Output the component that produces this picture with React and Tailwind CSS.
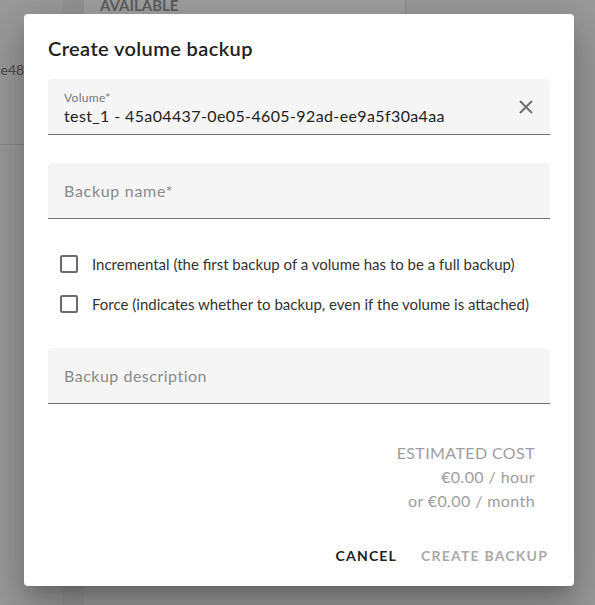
import React, { useState } from 'react';

const fieldBase = 'w-full bg-[#f5f5f5] rounded-t-[4px] border-b border-[#6f6f6f] px-4';

const Checkbox = ({ label, checked, onChange }) => (
    <label className="flex items-center h-10 pl-3 cursor-pointer">
        <span className="w-[18px] h-[18px] border-2 border-[#6b6b6b] rounded-[2px] flex items-center justify-center">
            {checked && (
                <svg viewBox="0 0 24 24" className="w-4 h-4 text-[#6b6b6b]" fill="none" stroke="currentColor" strokeWidth="3">
                    <path d="M5 12l5 5 9-10" />
                </svg>
            )}
        </span>
        <input type="checkbox" className="hidden" checked={checked} onChange={onChange} />
        <span className="ml-[14px] text-[15px] text-[#333]">{label}</span>
    </label>
);

export default function App() {
    const [incremental, setIncremental] = useState(false);
    const [force, setForce] = useState(false);

    return (
        <div className="relative w-[595px] h-[605px] overflow-hidden bg-[#9a9a9a]" style={{ fontFamily: 'Lato, "Open Sans", sans-serif' }}>
            {/* page behind the overlay */}
            <div className="flex h-full">
                <div className="w-[62px] flex flex-col">
                    <div className="h-[145px] border-b border-[#8a8a8a] flex items-center overflow-hidden">
                        <span className="text-[14px] text-[#4a4a4a] -ml-[6px] mb-[6px] whitespace-nowrap">ce48a12</span>
                    </div>
                </div>
                <div className="w-[22px] bg-[#949494]" />
                <div className="w-[322px] h-[145px] bg-[#a0a0a0] border-r border-[#8e8e8e] border-b border-b-[#8e8e8e]">
                    <div className="-mt-[6px] pl-4 text-[15px] font-bold text-[#5e5e5e]">AVAILABLE</div>
                </div>
            </div>

            {/* dialog */}
            <div className="absolute left-[24px] top-[14px] w-[550px] h-[572px] bg-white rounded-[4px] shadow-[0_11px_15px_-7px_rgba(0,0,0,0.2),0_24px_38px_3px_rgba(0,0,0,0.14),0_9px_46px_8px_rgba(0,0,0,0.12)] px-6 pt-5 flex flex-col">
                <h2 className="h-7 leading-7 text-[20px] tracking-[0.4px] font-semibold text-[#222]">Create volume backup</h2>

                <div className={`${fieldBase} mt-[17px] h-[56px] flex items-center`}>
                    <div className="flex-1 pt-[2px]">
                        <div className="text-[12px] leading-4 tracking-[0.3px] text-[#777]">Volume*</div>
                        <div className="text-[16px] leading-5 tracking-[0.38px] text-[#222]">test_1 - 45a04437-0e05-4605-92ad-ee9a5f30a4aa</div>
                    </div>
                    <svg viewBox="0 0 24 24" className="w-6 h-6 -mr-1 text-[#707070]" fill="none" stroke="currentColor" strokeWidth="2">
                        <path d="M6 6l12 12M18 6L6 18" />
                    </svg>
                </div>

                <div className={`${fieldBase} mt-[28px] h-[56px] flex items-center`}>
                    <span className="text-[16px] tracking-[0.7px] text-[#8a8a8a]">Backup name*</span>
                </div>

                <div className="mt-[25px] flex flex-col">
                    <Checkbox
                        label="Incremental (the first backup of a volume has to be a full backup)"
                        checked={incremental}
                        onChange={() => setIncremental(!incremental)}
                    />
                    <Checkbox
                        label="Force (indicates whether to backup, even if the volume is attached)"
                        checked={force}
                        onChange={() => setForce(!force)}
                    />
                </div>

                <div className={`${fieldBase} mt-[24px] h-[56px] flex items-center`}>
                    <span className="text-[16px] tracking-[0.5px] text-[#8a8a8a]">Backup description</span>
                </div>

                <div className="mt-[37px] pr-[15px] text-right text-[16px] leading-6 tracking-[0.4px] text-[#9e9e9e]">
                    <div>ESTIMATED COST</div>
                    <div>€0.00 / hour</div>
                    <div>or €0.00 / month</div>
                </div>

                <div className="mt-[24px] flex justify-end items-center gap-[24px] pr-[2px]">
                    <button className="h-9 text-[14px] font-bold tracking-[1.2px] text-[#222]">CANCEL</button>
                    <button disabled className="h-9 text-[14px] font-bold tracking-[1.2px] text-[#aaa]">CREATE BACKUP</button>
                </div>
            </div>
        </div>
    );
}
